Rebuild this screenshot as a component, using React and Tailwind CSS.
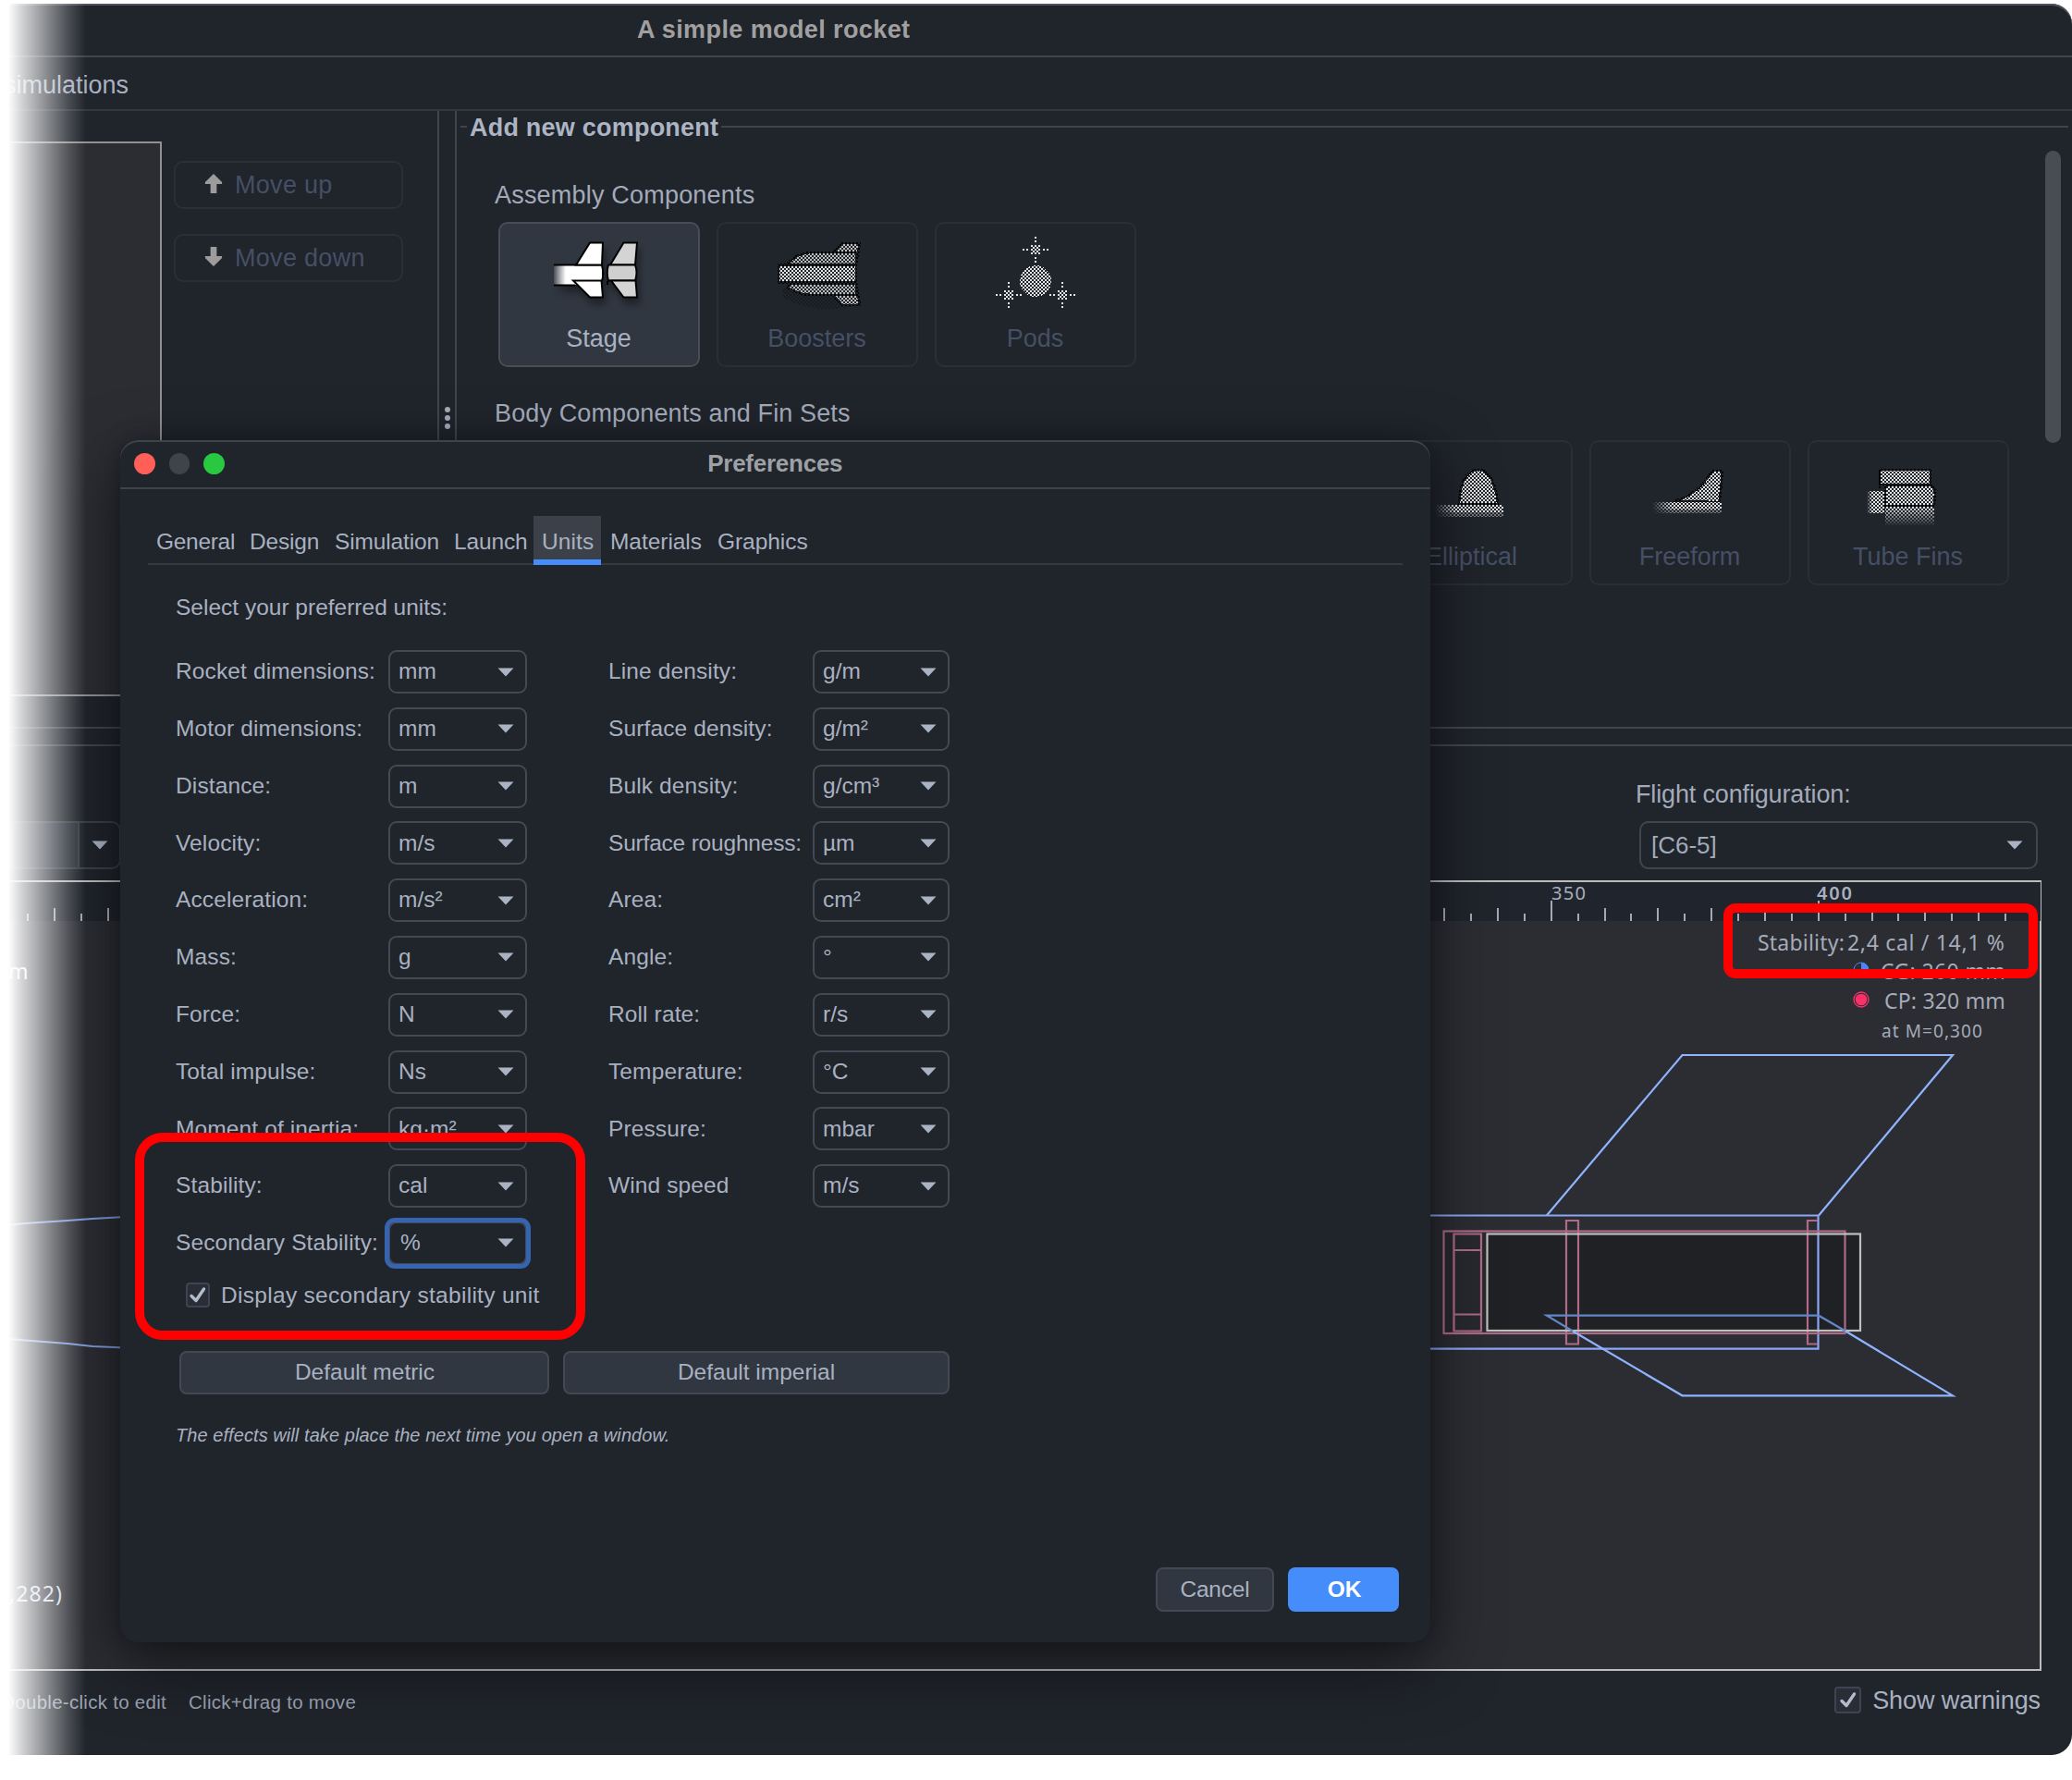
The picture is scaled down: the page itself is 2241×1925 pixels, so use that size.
import React from "react";

const LEFT_UNITS = [
  ["Rocket dimensions:", "mm"],
  ["Motor dimensions:", "mm"],
  ["Distance:", "m"],
  ["Velocity:", "m/s"],
  ["Acceleration:", "m/s²"],
  ["Mass:", "g"],
  ["Force:", "N"],
  ["Total impulse:", "Ns"],
  ["Moment of inertia:", "kg·m²"],
  ["Stability:", "cal"],
  ["Secondary Stability:", "%"],
];

const RIGHT_UNITS = [
  ["Line density:", "g/m"],
  ["Surface density:", "g/m²"],
  ["Bulk density:", "g/cm³"],
  ["Surface roughness:", "µm"],
  ["Area:", "cm²"],
  ["Angle:", "°"],
  ["Roll rate:", "r/s"],
  ["Temperature:", "°C"],
  ["Pressure:", "mbar"],
  ["Wind speed", "m/s"],
];

const TABS = [
  ["General", "w-[102px] pl-[9px] tracking-[-0.3px]"],
  ["Design", "w-[92px] pl-[8px] tracking-[-0.2px]"],
  ["Simulation", "w-[129px] pl-[8px] tracking-[-0.15px]"],
  ["Launch", "w-[94px] pl-[8px] tracking-[-0.15px]"],
  ["Units", "w-[73px] pl-[9px] tracking-[0.1px]"],
  ["Materials", "w-[117px] pl-[10px] tracking-[-0.05px]"],
  ["Graphics", "w-[115px] pl-[9px] tracking-[-0.05px]"],
];

function Caret({ className = "" }) {
  return (
    <svg viewBox="0 0 18 10" className={"h-[10px] w-[18px] shrink-0 " + className}>
      <path d="M0.5 0.5H17.5L9 9.5Z" fill="#a9b3c4" />
    </svg>
  );
}

function Checkbox({ className = "" }) {
  return (
    <span className={"flex shrink-0 items-center justify-center rounded-[4px] border-2 border-[#3d4555] bg-[#282d36] " + className}>
      <svg viewBox="0 0 20 20" className="h-[20px] w-[20px]">
        <path d="M3 10.5L8 15.5L16.5 3" fill="none" stroke="#b3bccb" strokeWidth="3.4" strokeLinecap="round" strokeLinejoin="round" />
      </svg>
    </span>
  );
}

/* Combo box used by the unit tables. */
function Combo({ value, focused, width }) {
  return (
    <div className={"relative flex h-[47px] items-center rounded-[9px] border-2 border-[#444953] pr-[12px] " + width + (focused ? " pl-[11px]" : " pl-[9px]")}>
      <span className="flex-1">{value}</span>
      <Caret />
      {focused && <div className="absolute -inset-[6px] rounded-[11px] border-[5px] border-[#3564b1]" />}
    </div>
  );
}

function UnitTable({ rows, labelWidth, comboWidth, focusedLabel }) {
  return (
    <div className="flex flex-col gap-[14.8px]">
      {rows.map(([label, value]) => (
        <div key={label} className="flex h-[47px] items-center">
          <span className={"whitespace-nowrap " + labelWidth + (label === "Surface roughness:" ? " tracking-[-0.2px]" : " tracking-[0.12px]")}>{label}</span>
          <Combo value={value} width={comboWidth} focused={label === focusedLabel} />
        </div>
      ))}
    </div>
  );
}

/* Shared fills: the disabled icons are drawn with a two-pixel checkerboard. */
function IconDefs() {
  return (
    <svg className="absolute h-0 w-0">
      <defs>
        <pattern id="ditherWhite" width="4" height="4" patternUnits="userSpaceOnUse">
          <path d="M0 0h2v2h-2zM2 2h2v2h-2z" fill="#e4e4e4" />
        </pattern>
        <pattern id="ditherGray" width="4" height="4" patternUnits="userSpaceOnUse">
          <path d="M0 0h2v2h-2zM2 2h2v2h-2z" fill="#bcbcbc" />
        </pattern>
        <pattern id="ditherBlack" width="4" height="4" patternUnits="userSpaceOnUse">
          <path d="M0 0h2v2h-2zM2 2h2v2h-2z" fill="#000" />
        </pattern>
        <linearGradient id="noseFade" x1="0" x2="1" y1="0" y2="0">
          <stop offset="0" stopColor="#fff" stopOpacity="0.1" />
          <stop offset="0.25" stopColor="#fff" />
        </linearGradient>
        <linearGradient id="fadeDown" x1="0" x2="0" y1="0" y2="1">
          <stop offset="0" stopColor="#fff" />
          <stop offset="1" stopColor="#fff" stopOpacity="0" />
        </linearGradient>
        <linearGradient id="fadeLeft" x1="0" x2="1" y1="0" y2="0">
          <stop offset="0" stopColor="#fff" stopOpacity="0" />
          <stop offset="0.3" stopColor="#fff" />
        </linearGradient>
        <mask id="maskDown" maskContentUnits="objectBoundingBox">
          <rect width="1" height="1" fill="url(#fadeDown)" />
        </mask>
        <mask id="maskLeft" maskContentUnits="objectBoundingBox">
          <rect width="1" height="1" fill="url(#fadeLeft)" />
        </mask>
        <filter id="softShadow" x="-30%" y="-30%" width="170%" height="170%">
          <feDropShadow dx="3" dy="7" stdDeviation="4" floodColor="#000" floodOpacity="0.4" />
        </filter>
      </defs>
    </svg>
  );
}

function StageIcon() {
  return (
    <g filter="url(#softShadow)" stroke="#000" strokeWidth="2">
      <rect x="1" y="37" width="52" height="21" fill="url(#noseFade)" stroke="none" />
      <path d="M1 36.5H53M1 58.5H24M53 37Q55.500 46 53 54" fill="none" />
      <path d="M40 12.500H54L53 36.500H25Z" fill="#fff" />
      <path d="M22 53.500H52.500L54 71.500H40Z" fill="#fff" />
      <path d="M76.500 12.500H91L89 36.500H62Z" fill="#d4d4d4" />
      <path d="M60 36.500H89Q92 45 89 53.500H60Q57.500 45 60 36.500Z" fill="#cfcfcf" />
      <path d="M63 53.500H89.500L91 71.500H76.500Z" fill="#d4d4d4" />
      <path d="M59 54V58" />
    </g>
  );
}

function BoostersIcon() {
  return (
    <g stroke="url(#ditherBlack)" strokeWidth="2.500">
      <path d="M12 62H92V80Q50 92 14 72Z" fill="url(#ditherBlack)" opacity="0.25" stroke="none" />
      <path d="M66 24L77 13H96L92 36H66Z" fill="url(#ditherGray)" />
      <path d="M66 68L77 80H96L92 56H66Z" fill="url(#ditherGray)" />
      <path d="M18 34Q30 23 44 23H92V36H20Z" fill="url(#ditherGray)" />
      <path d="M20 57H92V69H44Q30 69 18 61Z" fill="url(#ditherGray)" />
      <rect x="8" y="36.500" width="84" height="19" fill="url(#ditherWhite)" />
    </g>
  );
}

function PodStar({ x, y }) {
  return (
    <g transform={`translate(${x} ${y})`} fill="#e4e4e4">
      <path d="M-1 -14h2v2h-2zM-1 -10h2v2h-2zM-1 8h2v2h-2zM-1 12h2v2h-2zM-14 -1h2v2h-2zM-10 -1h2v2h-2zM8 -1h2v2h-2zM12 -1h2v2h-2z" />
      <path d="M-1 -1h2v2h-2zM-3 -3h2v2h-2zM1 -3h2v2h-2zM-3 1h2v2h-2zM1 1h2v2h-2zM-5 -1h2v2h-2zM3 -1h2v2h-2zM-1 -5h2v2h-2zM-1 3h2v2h-2zM-5 -5h2v2h-2zM3 -5h2v2h-2zM-5 3h2v2h-2zM3 3h2v2h-2z" />
    </g>
  );
}

function PodsIcon() {
  return (
    <g>
      <circle cx="50" cy="54" r="17" fill="url(#ditherWhite)" />
      <PodStar x={50} y={20} />
      <PodStar x={21} y={69} />
      <PodStar x={79} y={69} />
    </g>
  );
}

function EllipticalIcon() {
  return (
    <g>
      <path d="M36 59Q38 22 57 22Q74 22 78 59Z" fill="url(#ditherWhite)" stroke="url(#ditherBlack)" strokeWidth="2.500" />
      <g mask="url(#maskLeft)">
        <rect x="10" y="60" width="74" height="8" fill="url(#ditherWhite)" />
        <rect x="10" y="68" width="74" height="5" fill="url(#ditherWhite)" opacity="0.45" />
      </g>
    </g>
  );
}

function FreeformIcon() {
  return (
    <g>
      <path d="M32 56Q58 50 74 23H85L82 57Z" fill="url(#ditherWhite)" stroke="url(#ditherBlack)" strokeWidth="2.500" />
      <g mask="url(#maskLeft)">
        <rect x="9" y="57" width="75" height="8" fill="url(#ditherWhite)" />
        <rect x="9" y="65" width="75" height="4" fill="url(#ditherWhite)" opacity="0.45" />
      </g>
    </g>
  );
}

function TubeFinsIcon() {
  return (
    <g strokeWidth="2.500">
      <rect x="5" y="45" width="19" height="24" fill="url(#ditherWhite)" mask="url(#maskLeft)" />
      <rect x="19" y="22" width="55" height="16" fill="url(#ditherWhite)" stroke="url(#ditherBlack)" />
      <path d="M25 39H77Q81 50 77 61H25Z" fill="url(#ditherWhite)" stroke="url(#ditherBlack)" />
      <rect x="25" y="62" width="53" height="21" fill="url(#ditherWhite)" mask="url(#maskDown)" />
      <path d="M19 24V44M25 40V64" stroke="#000" strokeDasharray="2 2" />
    </g>
  );
}

function ComponentCard({ label, enabled, children }) {
  return (
    <div
      className={
        "flex h-[157px] w-[218px] shrink-0 flex-col items-center rounded-[10px] border-2 " +
        (enabled ? "border-[#474c57] bg-[#313741] text-[#a9b2c2]" : "border-[#292e37] text-[#455065]")
      }
    >
      <svg viewBox="0 0 100 100" className="mt-[8px] h-[100px] w-[100px]" shapeRendering={enabled ? "auto" : "crispEdges"}>
        {children}
      </svg>
      <span className="-ml-[1px] leading-[32px] tracking-[0px]">{label}</span>
    </div>
  );
}

function MoveButton({ label, down }) {
  return (
    <div className="flex h-[52px] w-[248px] items-center rounded-[10px] border-2 border-[#2a2f38] pl-[31px] text-[#455065]">
      <svg viewBox="0 0 20 24" className={"-mt-[3px] mr-[13px] h-[23px] w-[20px] " + (down ? "rotate-180" : "")}>
        <path d="M10 1L19.500 10.500V12.500H13.500V23H6.500V12.500H0.500V10.500Z" fill="#9c9c9c" />
      </svg>
      <span className="tracking-[0.3px]">{label}</span>
    </div>
  );
}

function RulerTicks() {
  const step = 28.9;
  const ticks = [];
  for (let i = -57; i <= 17; i++) {
    const x = Math.round(1677.700 + i * step);
    const top = i % 10 === 0 ? 974 : i % 2 === 0 ? 982 : 988;
    ticks.push(<rect key={i} x={x - 1} y={top} width="2" height={996 - top} fill="#a4a9b4" />);
  }
  return <g>{ticks}</g>;
}

function RocketView() {
  return (
    <svg viewBox="0 954 2207 851" className="block h-[851px] w-[2207px] overflow-visible" fontFamily="'Noto Sans', sans-serif" fill="none">
      <rect x="0" y="954" width="2207" height="42" fill="#20242c" />
      <RulerTicks />
      <g fill="#a9b0be" fontSize="20">
        <text x="1678" y="973" textLength="37">350</text>
        <text x="1965" y="973" textLength="38" fontWeight="600">400</text>
      </g>
      <g fill="#a5abb9" fontSize="23">
        <text x="1901" y="1028" textLength="94">Stability:</text>
        <text x="1998" y="1028" textLength="170">2,4 cal / 14,1 %</text>
        <text x="2034" y="1059" textLength="135">CG: 260 mm</text>
        <text x="2038" y="1091" textLength="131">CP: 320 mm</text>
        <text x="2035" y="1122" fontSize="19" textLength="109">at M=0,300</text>
      </g>
      <circle cx="2013" cy="1049" r="8" stroke="#4a86f5" />
      <path d="M2013 1041A8 8 0 0 1 2021 1049H2013ZM2013 1057A8 8 0 0 1 2005 1049H2013Z" fill="#4a86f5" />
      <circle cx="2013" cy="1081" r="8" stroke="#f5346c" strokeWidth="1.300" />
      <circle cx="2013" cy="1081" r="6.300" fill="#ff2f68" />
      <text x="9" y="1059" fontSize="23" fill="#eef3fb">m</text>
      <text x="10" y="1732" fontSize="23" fill="#d3dcea" textLength="57">,282)</text>

      <g stroke="#8fb3fc" strokeWidth="2.200">
        <path d="M0 1326L27 1323L73 1320L100 1318L135 1316M0 1447L27 1449.500L73 1453L100 1456L135 1457.500" stroke="#7f9be0" />
        <path d="M1672.800 1314.500L1819.500 1141H2112L1967 1314.500" />
      </g>
      <rect x="1561.500" y="1331" width="47" height="111" fill="#202124" fillOpacity="0.35" />
      <rect x="1608" y="1334.500" width="404" height="104.500" fill="#202124" />
      <g stroke="#8ba7f6" strokeWidth="2.200">
        <path d="M1500 1314.500H1966.500V1458.700H1500" />
      </g>
      <g stroke="#b06a88" strokeWidth="2.200">
        <rect x="1561.500" y="1331.500" width="434" height="110.500" />
        <path d="M1572.500 1334.500H1602V1439.500H1572.500ZM1572.500 1352H1602M1572.500 1421.500H1602" />
        <path d="M1694 1320H1707V1453.500H1694ZM1966 1320H1955V1453.500H1966" />
      </g>
      <rect x="1608.500" y="1334.500" width="403.500" height="104.500" stroke="#bdc0bd" strokeWidth="2.200" />
      <path d="M1701 1439.500L1672.800 1422.700H1967L1996 1439.500" stroke="#6287c6" strokeWidth="2.200" />
      <path d="M1701 1439.500L1819.500 1509.300H2112L1996 1439.500" stroke="#8fb3fc" strokeWidth="2.200" />
    </svg>
  );
}

function PreferencesDialog() {
  return (
    <div className="absolute top-[476px] left-[130px] flex h-[1300px] w-[1417px] flex-col rounded-[20px] bg-[#20242b] text-[24.5px] tracking-[0px] text-[#a9b1c0] shadow-[0_24px_70px_rgba(0,0,0,0.5),0_0_24px_rgba(0,0,0,0.25),inset_0_2px_0_#3f444b]">
      <div className="relative flex h-[53px] shrink-0 items-center border-b-2 border-[#3d424b] pl-[15px]">
        <div className="flex gap-[15px]">
          <i className="h-[22.500px] w-[22.500px] rounded-full bg-[#ff5f57]" />
          <i className="h-[22.500px] w-[22.500px] rounded-full bg-[#3f434c]" />
          <i className="h-[22.500px] w-[22.500px] rounded-full bg-[#28c840]" />
        </div>
        <span className="flex-1 pr-[113px] text-center text-[26px] font-bold tracking-[-0.25px] text-[#9da0a4]">Preferences</span>
      </div>

      <div className="mt-[29px] ml-[30px] flex w-[1357px] border-b-2 border-[#343943]">
        {TABS.map(([name, width]) => (
          <div
            key={name}
            className={
              "-mb-[2px] flex h-[53px] items-center pt-[4px] " +
              width +
              (name === "Units" ? " border-b-[6px] border-[#468dfc] bg-[#3b4049] [&>span]:relative [&>span]:top-[3px]" : "")
            }
          >
            <span>{name}</span>
          </div>
        ))}
      </div>

      <div className="mt-[30px] ml-[60px] leading-[32px]">Select your preferred units:</div>

      <div className="mt-[30px] ml-[60px] flex">
        <UnitTable rows={LEFT_UNITS} labelWidth="w-[230px]" comboWidth="w-[150px]" focusedLabel="Secondary Stability:" />
        <div className="ml-[88px]">
          <UnitTable rows={RIGHT_UNITS} labelWidth="w-[221px]" comboWidth="w-[148px]" />
        </div>
      </div>

      <div className="mt-[17px] ml-[71px] flex items-center">
        <Checkbox className="h-[27px] w-[26px]" />
        <span className="ml-[12px] leading-[32px] tracking-[0.3px]">Display secondary stability unit</span>
      </div>

      <div className="mt-[44px] ml-[64px] flex gap-[15px]">
        <div className="flex h-[47px] w-[400px] items-center justify-center rounded-[8px] border-2 border-[#434852] bg-[#313741] pl-px">Default metric</div>
        <div className="flex h-[47px] w-[418px] items-center justify-center rounded-[8px] border-2 border-[#434852] bg-[#313741]">Default imperial</div>
      </div>

      <div className="mt-[28px] ml-[60px] text-[20px] leading-[32px] tracking-[0.07px] italic">The effects will take place the next time you open a window.</div>

      <div className="mt-auto mr-[34px] mb-[33px] flex justify-end gap-[15px]">
        <div className="flex h-[48px] w-[128px] items-center justify-center rounded-[8px] border-2 border-[#434852] bg-[#313741] tracking-[-0.2px]">Cancel</div>
        <div className="flex h-[48px] w-[120px] items-center justify-center rounded-[8px] bg-[#468dfc] pl-[2px] font-bold text-white">OK</div>
      </div>
    </div>
  );
}

export default function App() {
  return (
    <div className="relative h-[1925px] w-[2241px] overflow-hidden bg-white pt-[4px] font-['Liberation_Sans',Arial,sans-serif] text-[27px] tracking-[0.15px] text-[#a3abba]">
      <IconDefs />
      <div className="relative flex h-[1894px] flex-col overflow-hidden rounded-r-[22px] bg-[#20242b] shadow-[inset_0_2px_0_#50545a]">
        <div className="flex h-[58px] shrink-0 items-center border-b-2 border-[#41454e] pl-[689px] font-bold tracking-[0.4px] text-[#a0a0a0]">
          A simple model rocket
        </div>
        <div className="flex h-[58px] shrink-0 items-center border-b-2 border-[#323741] pt-[5px] pl-[4px] tracking-[0px] text-[#a9b1c0]">simulations</div>

        <div className="flex h-[666px] shrink-0">
          <div className="flex w-[473px] pt-[33px]">
            <div className="h-[600px] w-[175px] border-y-2 border-r-2 border-[#919191] bg-[#2b2d33]" />
            <div className="ml-[13px] flex flex-col gap-[27px] pt-[21px]">
              <MoveButton label="Move up" />
              <MoveButton label="Move down" down />
            </div>
          </div>
          <div className="flex w-[21px] flex-col items-center gap-[3px] border-x-2 border-[#41454e] pt-[320px]">
            <i className="h-[6px] w-[6px] rounded-full bg-[#a3abba]" />
            <i className="h-[6px] w-[6px] rounded-full bg-[#a3abba]" />
            <i className="h-[6px] w-[6px] rounded-full bg-[#a3abba]" />
          </div>
          <div className="flex-1 pr-[4px] pl-[4px]">
            <div className="flex h-[34px] items-center">
              <i className="h-[2px] w-[7px] bg-[#40444d]" />
              <span className="mx-[3px] pt-[2px] whitespace-nowrap font-bold tracking-[0.22px] text-[#adb5c4]">Add new component</span>
              <i className="h-[2px] flex-1 bg-[#40444d]" />
            </div>
            <div className="flex justify-between pr-[8px] pl-[37px]">
              <div className="pt-[41px]">
                <div className="leading-[32px] tracking-[0.2px]">Assembly Components</div>
                <div className="mt-[13px] ml-[4px] flex gap-[18px]">
                  <ComponentCard label="Stage" enabled>
                    <StageIcon />
                  </ComponentCard>
                  <ComponentCard label="Boosters">
                    <BoostersIcon />
                  </ComponentCard>
                  <ComponentCard label="Pods">
                    <PodsIcon />
                  </ComponentCard>
                </div>
                <div className="mt-[34px] leading-[32px] tracking-[0.12px]">Body Components and Fin Sets</div>
                <div className="mt-[13px] ml-[948px] flex gap-[18px]">
                  <ComponentCard label="Elliptical">
                    <EllipticalIcon />
                  </ComponentCard>
                  <ComponentCard label="Freeform">
                    <FreeformIcon />
                  </ComponentCard>
                  <ComponentCard label="Tube Fins">
                    <TubeFinsIcon />
                  </ComponentCard>
                </div>
              </div>
              <div className="mt-[9px] h-[316px] w-[17px] rounded-full bg-[#484c54]" />
            </div>
          </div>
        </div>

        <div className="h-[21px] shrink-0 border-y-2 border-[#41454e]" />

        <div className="flex h-[145px] shrink-0 justify-between">
          <div className="mt-[81px] flex h-[52px] w-[131px] rounded-r-[10px] border-2 border-[#3b404a]">
            <div className="w-[84px] border-r-2 border-[#3b404a] bg-[#2a2f39]" />
            <div className="flex flex-1 items-center justify-center">
              <Caret />
            </div>
          </div>
          <div className="mr-[37px] w-[434px] pt-[36px]">
            <div className="-ml-px leading-[32px] tracking-[-0.15px]">Flight configuration:</div>
            <div className="mt-[13px] ml-[3px] flex h-[52px] w-[431px] items-center rounded-[10px] border-2 border-[#41454e] pr-[14px] pl-[11px] text-[26px] tracking-[0px]">
              <span className="flex-1">[C6-5]</span>
              <Caret />
            </div>
          </div>
        </div>

        <div className="h-[855px] w-[2208px] shrink-0 border-y-2 border-r-2 border-[#bcbcbc] bg-[#2b2d33]">
          <RocketView />
        </div>

        <div className="flex flex-1 items-start justify-between pt-[15px] pr-[34px]">
          <div className="flex gap-[24px] pt-[3px] text-[20.5px] leading-[32px] tracking-[0.28px] text-[#9aa2b1]">
            <span className="flex w-[180px] justify-end whitespace-nowrap">Double-click to edit</span>
            <span className="whitespace-nowrap">Click+drag to move</span>
          </div>
          <div className="flex items-center text-[#a9b1c0]">
            <Checkbox className="h-[29px] w-[29px]" />
            <span className="ml-[12px] pt-px leading-[32px] tracking-[-0.1px]">Show warnings</span>
          </div>
        </div>

        <div className="absolute -top-[4px] left-0">
          <PreferencesDialog />
        </div>
      </div>

      <div className="absolute top-[1225px] left-[146px] h-[224px] w-[487px] rounded-[30px] border-[10px] border-[#ff0000]" />
      <div className="absolute top-[977px] left-[1864px] h-[81px] w-[340px] rounded-[13px] border-[10px] border-[#ff0000]" />
      <div className="absolute top-0 left-0 h-[1925px] w-[93px] bg-[linear-gradient(90deg,#fff_9px,rgba(255,255,255,0.82)_22px,rgba(255,255,255,0.5)_48px,rgba(255,255,255,0.2)_73px,rgba(255,255,255,0)_93px)]" />
    </div>
  );
}
